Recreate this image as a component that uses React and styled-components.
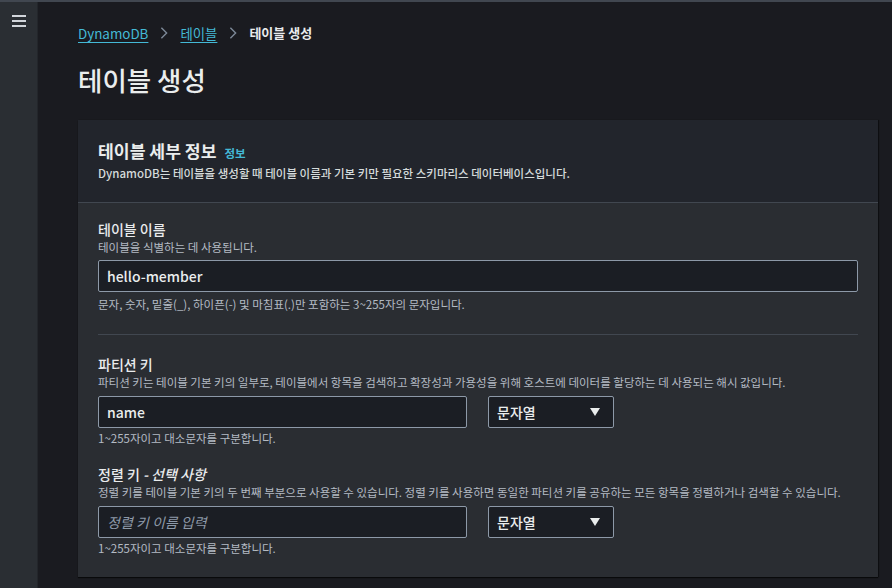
import React from "react";
import styled, { createGlobalStyle } from "styled-components";

const Global = createGlobalStyle`
  html, body { margin: 0; padding: 0; background: #1a1b20; }
  body { font-family: "Noto Sans CJK KR", "Noto Sans", sans-serif; color: #e9ebed; }
  * { box-sizing: border-box; }
`;

const Page = styled.div`
  display: flex;
  min-height: 100vh;
  border-top: 2px solid #414750;
`;

const Sidebar = styled.aside`
  width: 38px;
  flex: none;
  background: #2a2e33;
  border-right: 1px solid #23262b;
  display: flex;
  justify-content: center;
  padding-top: 13px;
`;

const MenuButton = styled.button`
  width: 18px;
  height: 16px;
  padding: 0;
  border: none;
  background: none;
  color: #d1d5db;
  display: flex;
  align-items: flex-start;
  justify-content: center;
`;

const Main = styled.main`
  flex: 1;
  padding: 21px 14px 0 40px;
`;

const Crumbs = styled.nav`
  display: flex;
  align-items: center;
  gap: 9px;
  font-size: 13.4px;
  line-height: 20px;
`;

const CrumbLink = styled.a`
  color: #44b9d6;
  text-decoration: underline;
  text-underline-offset: 3px;
  text-decoration-thickness: 1px;
`;

const CrumbCurrent = styled.span`
  color: #e9ebed;
  font-weight: 700;
  font-size: 13px;
`;

const Chevron = styled.svg`
  width: 14px;
  height: 14px;
  color: #7d8998;
`;

const Title = styled.h1`
  margin: 19px 0 22px;
  font-size: 26.5px;
  line-height: 36px;
  font-weight: 500;
  color: #eaeded;
`;

const Panel = styled.section`
  width: 800px;
  background: #2a2d32;
  box-shadow: 0 1px 1px rgba(0, 0, 0, 0.6), 1px 0 1px rgba(0, 0, 0, 0.4);
`;

const PanelHeader = styled.header`
  background: #22252c;
  padding: 19px 20px 21px;
  border-bottom: 1px solid #414750;
`;

const PanelTitle = styled.h2`
  margin: 0;
  display: flex;
  align-items: baseline;
  gap: 8px;
  font-size: 17.2px;
  line-height: 24px;
  font-weight: 700;
  color: #eaeded;
`;

const InfoLink = styled.span`
  font-size: 11.5px;
  font-weight: 700;
  color: #44b9d6;
`;

const PanelDesc = styled.p`
  margin: 0;
  font-size: 11.5px;
  line-height: 16px;
  font-weight: 500;
  color: #d5dbdb;
`;

const PanelBody = styled.div`
  padding: 16px 20px 21px;
`;

const Field = styled.div`
  display: flex;
  flex-direction: column;
`;

const Label = styled.label`
  font-size: 14px;
  line-height: 20px;
  font-weight: 500;
  color: #e9ebed;
  em { font-style: italic; }
`;

const Hint = styled.div`
  font-size: 11.5px;
  line-height: 16px;
  color: #b4bbc4;
  margin-top: ${(p) => p.$top || 0}px;
`;

const Row = styled.div`
  display: flex;
  gap: 21px;
  margin-top: 6px;
`;

const TextInput = styled.input`
  width: ${(p) => p.$width};
  height: 32px;
  margin-top: ${(p) => p.$top || 0}px;
  padding: 0 8px;
  background: #1b1e24;
  border: 1px solid #8d99a8;
  border-radius: 2px;
  color: #eaeded;
  font-family: inherit;
  font-size: 14px;
  font-weight: 500;
  outline: none;
  &::placeholder {
    color: #8d99a8;
    font-style: italic;
    font-weight: 400;
  }
`;

const Select = styled.div`
  width: 126px;
  height: 32px;
  display: flex;
  align-items: center;
  justify-content: space-between;
  padding: 0 12px 0 8px;
  background: #1b1e24;
  border: 1px solid #8d99a8;
  border-radius: 2px;
  font-size: 14px;
  font-weight: 500;
  color: #eaeded;
`;

const Divider = styled.hr`
  border: none;
  border-top: 1px solid #414750;
  margin: 22px 0 19px;
`;

const Gap = styled.div`
  height: ${(p) => p.$h}px;
`;

const ChevronRight = () => (
  <Chevron viewBox="0 0 16 16" fill="none" stroke="currentColor" strokeWidth="1.6">
    <path d="M5 2l6 6-6 6" />
  </Chevron>
);

const Caret = () => (
  <svg width="12" height="10" viewBox="0 0 12 10">
    <path d="M1 1h10L6 9z" fill="#eaeded" />
  </svg>
);

const TypeSelect = () => (
  <Select>
    <span>문자열</span>
    <Caret />
  </Select>
);

export default function App() {
  return (
    <>
      <Global />
      <Page>
        <Sidebar>
          <MenuButton aria-label="menu">
            <svg width="14" height="12" viewBox="0 0 14 12">
              <rect x="0" y="0" width="14" height="2" fill="currentColor" />
              <rect x="0" y="5" width="14" height="2" fill="currentColor" />
              <rect x="0" y="10" width="14" height="2" fill="currentColor" />
            </svg>
          </MenuButton>
        </Sidebar>
        <Main>
          <Crumbs>
            <CrumbLink>DynamoDB</CrumbLink>
            <ChevronRight />
            <CrumbLink>테이블</CrumbLink>
            <ChevronRight />
            <CrumbCurrent>테이블 생성</CrumbCurrent>
          </Crumbs>
          <Title>테이블 생성</Title>
          <Panel>
            <PanelHeader>
              <PanelTitle>
                테이블 세부 정보 <InfoLink>정보</InfoLink>
              </PanelTitle>
              <PanelDesc>
                DynamoDB는 테이블을 생성할 때 테이블 이름과 기본 키만 필요한 스키마리스 데이터베이스입니다.
              </PanelDesc>
            </PanelHeader>
            <PanelBody>
              <Field>
                <Label>테이블 이름</Label>
                <Hint>테이블을 식별하는 데 사용됩니다.</Hint>
                <TextInput $width="760px" $top={5} defaultValue="hello-member" />
                <Hint $top={4}>문자, 숫자, 밑줄(_), 하이픈(-) 및 마침표(.)만 포함하는 3~255자의 문자입니다.</Hint>
              </Field>
              <Divider />
              <Field>
                <Label>파티션 키</Label>
                <Hint>
                  파티션 키는 테이블 기본 키의 일부로, 테이블에서 항목을 검색하고 확장성과 가용성을 위해 호스트에 데이터를 할당하는 데 사용되는 해시 값입니다.
                </Hint>
                <Row>
                  <TextInput $width="369px" defaultValue="name" />
                  <TypeSelect />
                </Row>
                <Hint $top={2}>1~255자이고 대소문자를 구분합니다.</Hint>
              </Field>
              <Gap $h={18} />
              <Field>
                <Label>
                  정렬 키 <em>- 선택 사항</em>
                </Label>
                <Hint>
                  정렬 키를 테이블 기본 키의 두 번째 부분으로 사용할 수 있습니다. 정렬 키를 사용하면 동일한 파티션 키를 공유하는 모든 항목을 정렬하거나 검색할 수 있습니다.
                </Hint>
                <Row>
                  <TextInput $width="369px" placeholder="정렬 키 이름 입력" />
                  <TypeSelect />
                </Row>
                <Hint $top={2}>1~255자이고 대소문자를 구분합니다.</Hint>
              </Field>
            </PanelBody>
          </Panel>
        </Main>
      </Page>
    </>
  );
}
